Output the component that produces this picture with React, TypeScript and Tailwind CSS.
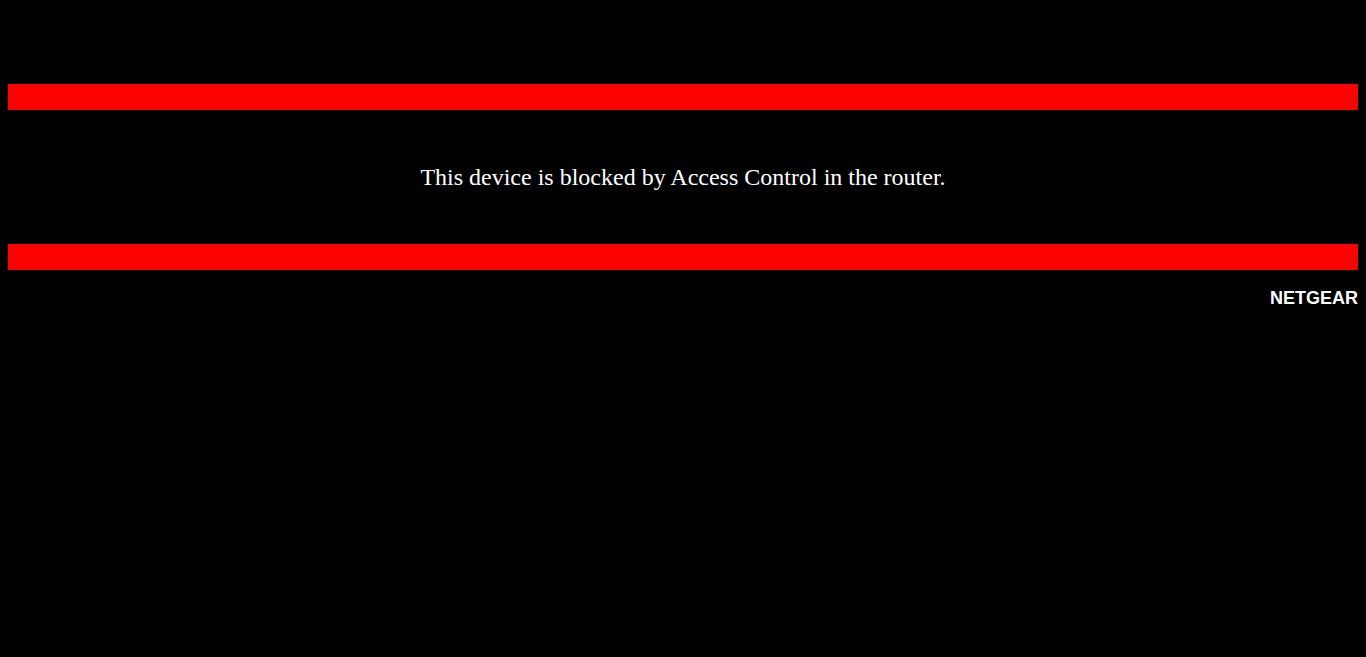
import React from "react";

const Bar: React.FC = () => <div className="h-[26px] w-full bg-[#ff0000]" />;

export default function App() {
  return (
    <div className="min-h-screen w-full bg-black px-2 pt-[84px]">
      <Bar />
      <div className="flex h-[134px] items-center justify-center">
        <p className="text-[24px] leading-[27px] text-white font-['Liberation_Serif','Times_New_Roman',serif]">
          This device is blocked by Access Control in the router.
        </p>
      </div>
      <Bar />
      <div className="mt-[18px] text-right text-[18px] font-bold leading-[21px] text-white font-['Liberation_Sans',Arial,sans-serif]">
        NETGEAR
      </div>
    </div>
  );
}
